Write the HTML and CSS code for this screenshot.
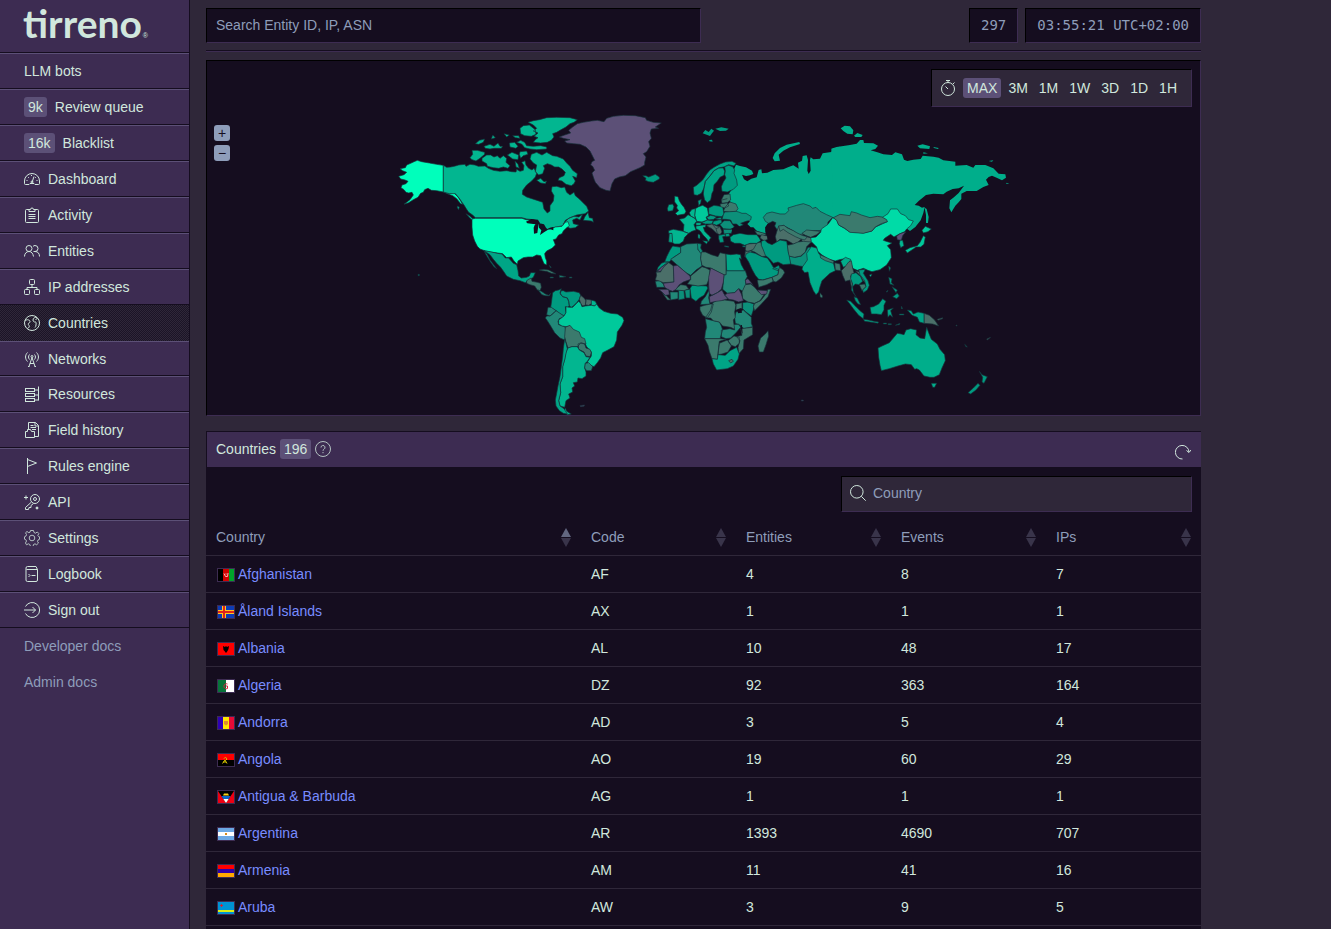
FILE: index.html
```
<!DOCTYPE html>
<html lang="en">
<head>
<meta charset="utf-8">
<title>Countries | tirreno</title>
<link rel="stylesheet" href="styles.css">
</head>
<body>
<aside class="sidebar">
  <a class="logo" href="#"><span class="logo-word">tirreno</span><span class="logo-mark">®</span></a>
  <nav class="nav">
    <a href="#">LLM bots</a>
    <a href="#"><span class="badge">9k</span>Review queue</a>
    <a href="#"><span class="badge">16k</span>Blacklist</a>
    <a href="#"><svg class="icon" viewBox="0 0 16 16"><path d="M1.500 13.500a1 1 0 0 1-1-1V10a7.500 7.500 0 0 1 15 0v2.500a1 1 0 0 1-1 1h-3.500L10 12.500H6l-1 1zM8 11.500l2-6M2.500 9.500h1M4 6l.8.8M7.500 4v1M12 6l-.8.8M13.500 9.500h-1"/><circle cx="8" cy="11" r="1"/></svg>Dashboard</a>
    <a href="#"><svg class="icon" viewBox="0 0 16 16"><path d="M5 2.500H2.500a1 1 0 0 0-1 1v11a1 1 0 0 0 1 1h11a1 1 0 0 0 1-1v-11a1 1 0 0 0-1-1H11M5 4.500v-2h1.500a1.500 1.500 0 0 1 3 0H11v2zM4.500 7.500h7M4.500 9.500h7M4.500 11.500h7"/></svg>Activity</a>
    <a href="#"><svg class="icon" viewBox="0 0 16 16"><circle cx="5" cy="5.500" r="3"/><path d="M.5 13.500c0-3 2-5 4.500-5s4 2 4.500 5M9 3.500c.5-.8 1.300-1 2-1a3 3 0 0 1 0 6H9.500M11 8.500c3 0 4.500 2 4.500 5"/></svg>Entities</a>
    <a href="#"><svg class="icon" viewBox="0 0 16 16"><rect x="5.500" y=".5" width="5" height="5" rx="1"/><rect x=".5" y="10.500" width="5" height="5" rx="1"/><rect x="10.500" y="10.500" width="5" height="5" rx="1"/><path d="M8 5.500v3M3 10.500v-2h10v2"/></svg>IP addresses</a>
    <a class="active" href="#" aria-current="page"><svg class="icon" viewBox="0 0 16 16"><circle cx="8" cy="8" r="7.500"/><path d="M1 5.500c1.500-1 3.500-1 4.500 0s.5 2-.5 2.500-1 1.500 0 2.500-.5 2.500-1.500 3M13 2.500c-2-.5-4 .5-4 2.500s1.500 2 2.500 2 .5 2 .5 3-.5 2-1 2.500M11.500 4.500l2-1"/></svg>Countries</a>
    <a href="#"><svg class="icon" viewBox="0 0 16 16"><path d="M5 15.500l3-9 3 9M6 12.500h4M5.500 15.500H4M10.500 15.500H12M3.500 1.500c-2.600 2.700-2.600 6.300 0 9M12.500 1.500c2.600 2.700 2.600 6.300 0 9M5.500 3.500c-1.300 1.700-1.300 3.300 0 5M10.500 3.500c1.300 1.700 1.300 3.300 0 5"/><circle cx="8" cy="5.500" r="1"/></svg>Networks</a>
    <a href="#"><svg class="icon" viewBox="0 0 16 16"><rect x="1.500" y="2.500" width="9" height="3"/><rect x="1.500" y="7.500" width="9" height="3"/><rect x="1.500" y="12.500" width="9" height="3"/><path d="M14.500.5v14M10.500 4h4M10.500 9h4M10.500 14h4"/></svg>Resources</a>
    <a href="#"><svg class="icon" viewBox="0 0 16 16"><path d="M4.500 7.500v-7h7l3 3v11h-4M11 .5v3.500h3.500M6.500 3.500h3M6.500 5.500h5.500M8 7.500h4M1.500 15.500v-6h2v-2h3l1 2h3v6z"/></svg>Field history</a>
    <a href="#"><svg class="icon" viewBox="0 0 16 16"><path d="M3.500 0v16M3.500 1.500l9 3.500-9 3.500"/></svg>Rules engine</a>
    <a href="#"><svg class="icon" viewBox="0 0 16 16"><circle cx="11" cy="5" r="4.500"/><circle cx="11" cy="5" r="1.500"/><path d="M7.500 8l-6 5.500v2h3l.5-2h2v-2l2.500-2M2 1.500v4M0 3.500h4"/><circle cx="13" cy="14" r="1" fill="currentColor"/></svg>API</a>
    <a href="#"><svg class="icon muted" viewBox="0 0 16 16"><circle cx="8" cy="8" r="2.800"/><path d="M6.500.5h3l.5 2 1.500.7L13.300 2l1.500 1.500-1 2 .7 1 1 .3v2.500l-1.500.7-.5 1.500 1 1.500-1.800 1.800-1.700-1-1.500.7-.5 2h-2.500l-.7-2-1.500-.7-1.800 1L1.500 13l1-2-.7-1.300-1.300-.5V6.800L2 6l.5-1.500-1-1.700L3 1.500l1.800 1.200L6 2.200z"/></svg>Settings</a>
    <a href="#"><svg class="icon" viewBox="0 0 16 16"><path d="M2.500 3.500h11v10.500a1.500 1.500 0 0 1-1.500 1.500H3.500a1.500 1.500 0 0 1-1.500-1.500V2A1.500 1.500 0 0 1 3.500.5H12L13.500 3.500M4.500 8l1.500 1.500L4.500 11M7.500 9.500h4"/></svg>Logbook</a>
    <a href="#"><svg class="icon" viewBox="0 0 16 16"><path d="M1.500 4.500a7.500 7.500 0 1 1 0 7M0 8h11.500M8.500 5l3 3-3 3"/></svg>Sign out</a>
  </nav>
  <div class="docs">
    <a href="#">Developer docs</a>
    <a href="#">Admin docs</a>
  </div>
</aside>

<main class="main">
  <header class="topbar">
    <input class="well global-search" type="search" placeholder="Search Entity ID, IP, ASN" aria-label="Search">
    <div class="stats"><span class="well stat">297</span><time class="well stat">03:55:21 UTC+02:00</time></div>
  </header>

  <section class="map-panel" aria-label="Map">
    <svg class="map" viewBox="207 61 993 354">
      <!-- North America -->
      <g transform="translate(390 105) scale(.333333)">
        <path class="c5" d="M160 181L140 178 118 174 95 170 82 166 72 170 62 175 50 180 46 188 30 191 38 197 50 202 42 209 26 214 32 222 45 225 54 229 48 236 36 240 33 248 42 254 48 262 56 264 66 262 70 270 60 284 42 298 56 293 70 284 84 277 92 265 100 262 104 254 114 250 124 256 140 257 160 261 178 266 192 264 204 276 212 288 218 298 212 296 200 281 188 272 176 268 160 261Z"/>
        <path class="c3" d="M160 181L170 187 182 186 196 183 206 180 225 178 228 184 240 178 255 180 265 184 285 183 295 190 310 196 330 199 350 197 365 200 378 201 380 193 390 199 400 196 402 182 395 172 405 167 408 180 416 190 426 195 432 190 440 205 436 216 425 228 410 240 398 256 397 268 410 276 428 282 444 287 458 292 462 312 472 324 480 318 480 302 490 288 492 272 484 258 486 245 500 244 514 248 524 246 530 262 540 270 552 262 556 272 568 282 580 294 590 304 596 318 585 326 560 330 540 338 526 346 518 362 500 366 480 370 470 374 450 362 446 350 430 344 410 342 396 338 256 338 248 330 236 322 228 310 222 300 216 292 208 280 196 266 178 266 160 261Z
        M526 362L520 356 536 340 552 334 566 336 578 328 570 345 560 340 548 345 550 356 566 360 556 368 540 370ZM594 322L584 336 580 346 604 348 610 352 608 340 598 338ZM228 326L238 332 252 344 254 350 240 340ZM202 303L208 306 206 314 202 308Z
        M414 52L430 47 448 44 470 38 500 37 540 38 562 44 552 52 540 56 528 66 510 76 500 82 488 86 492 96 484 106 472 112 452 114 430 112 436 104 444 98 432 94 444 84 430 78 440 70 430 60ZM390 70L400 62 418 60 436 74 438 88 424 94 404 92 392 86ZM380 112L392 106 404 112 410 122 430 124 452 122 470 126 470 132 440 134 420 132 404 128 396 118Z
        M276 160L290 150 302 150 312 156 322 152 330 160 340 152 350 160 348 172 360 182 354 190 340 186 326 190 310 188 292 184 290 176 276 168ZM246 136L262 136 284 142 284 148 270 160 258 168 246 164 240 158 248 148ZM282 124L300 118 312 124 324 114 330 124 338 124 334 130 312 130 300 132 286 130ZM256 116L268 106 284 102 280 112 266 118ZM308 90L316 98 304 102ZM342 86L358 90 350 96ZM358 114L374 112 384 124 378 130 360 126ZM368 92L386 92 390 100 376 98ZM352 150L366 142 386 150 384 164 368 162ZM390 140L410 138 414 148 400 152 392 160 388 148ZM375 168L384 178 388 190 378 186Z
        M424 148L440 142 456 150 470 142 488 152 500 154 520 162 530 174 540 184 548 196 562 206 560 218 548 214 556 228 552 236 544 242 528 238 516 228 504 226 508 218 522 212 526 202 516 192 506 186 494 186 484 180 472 176 460 182 464 190 458 206 446 210 436 200 440 180 430 174 420 162ZM440 226L452 220 462 230 470 228 466 236 452 234Z"/>
        <path class="c5" d="M246 342L256 340 396 340 408 344 430 346 446 350 452 364 470 374 482 372 496 366 516 364 526 352 534 350 538 362 528 370 520 378 516 386 506 390 498 402 490 404 494 414 496 420 486 430 470 438 464 446 466 458 470 468 470 480 462 476 456 462 452 452 440 450 428 456 414 456 400 458 384 468 382 478 372 468 364 456 350 458 338 446 322 444 306 442 286 438 270 432 262 424 254 408 248 390 246 366Z"/>
        <path class="water" d="M408 350L424 342 444 344 450 356 430 357 412 355ZM435 358L446 356 442 384 432 386 431 368ZM446 354L462 358 468 368 474 374 462 382 450 390 454 376 447 368ZM474 370L490 366 490 376Z"/>
        <path class="c0" d="M508 96L524 90 542 84 536 76 548 66 562 56 580 52 604 48 622 46 642 50 650 40 670 34 700 31 736 32 766 38 770 46 790 52 814 54 796 66 806 70 784 72 780 84 784 100 776 110 780 124 770 140 760 146 768 156 764 172 764 180 750 188 736 194 722 200 706 212 688 216 674 222 666 236 660 258 648 256 630 248 616 232 612 222 606 204 614 196 608 184 602 180 606 170 614 166 606 150 600 138 588 126 570 118 550 116 530 114 524 108 540 104 520 100Z"/>
        <path class="c2" d="M758 212L768 212 776 216 796 208 808 216 808 222 790 232 776 230 766 226 768 220ZM84 508h4v4h-4Z"/>
      </g>
      <!-- Central and South America -->
      <g transform="translate(480 250) scale(.333333)">
        <path class="c2b" d="M12 2L30 5 44 8 52 10 66 12 76 24 86 24 100 40 110 44 114 62 116 78 124 84 140 82 148 78 152 68 166 68 160 82 154 86 142 92 136 98 120 92 100 88 80 78 72 66 62 52 50 40 40 28 30 14ZM12 2L22 14 30 30 44 48 50 56 42 50 30 34 18 14Z"/>
        <path class="c1" d="M140 92L146 88 154 84 156 94 172 97 182 100 184 112 180 122 172 120 164 108 150 104 140 100ZM178 60L192 58 206 60 222 68 228 72 214 70 200 64 186 62Z"/>
        <path class="c1b" d="M174 120L184 124 196 132 206 136 212 130 208 138 196 137 186 134ZM238 76L258 80 248 82 238 82ZM210 81h10v3h-10ZM268 81h8v3h-8ZM208 46L214 52 211 53Z"/>
        <path class="c2" d="M218 128L226 122 236 120 244 116 240 128 248 140 262 144 266 154 268 168 262 172 256 170 258 188 252 198 238 190 228 182 212 172 214 160 216 144ZM244 122L250 122 258 126 280 124 298 128 302 136 298 148 290 158 280 168 274 172 268 168 266 154 262 144 248 140 240 132Z"/>
        <path class="c0b" d="M302 136L312 144 318 152 316 166 308 168 302 160 298 148ZM318 148L334 150 336 160 326 166 316 164Z"/>
        <path class="c3" d="M334 150L346 154 350 162 344 168 334 166Z"/>
        <path class="c1b" d="M204 172L214 172 228 182 220 190 210 198 200 194 202 182ZM200 198L210 198 222 188 228 182 240 190 252 198 248 202 238 206 234 214 236 224 248 228 256 232 258 248 254 270 240 264 224 248 212 228 202 212 196 204Z"/>
        <path class="c4" d="M258 170L268 172 278 172 290 160 296 154 302 160 306 170 316 168 334 166 344 168 350 162 358 174 372 184 392 190 412 192 428 202 432 212 426 226 412 246 410 270 402 290 384 300 368 308 362 324 352 338 342 350 328 344 322 336 334 318 334 306 320 290 316 282 300 262 280 244 270 228 258 230 246 228 236 222 236 210 252 198 258 188Z"/>
        <path class="c1" d="M256 232L270 226 280 238 298 246 304 262 314 266 318 282 302 280 292 290 276 290 264 294 258 276 254 260ZM294 282L304 278 314 282 318 294 330 298 334 308 330 320 318 318 312 306 296 298Z"/>
        <path class="c3" d="M264 294L276 290 292 290 298 300 312 308 318 320 330 322 322 334 316 340 314 354 318 366 318 378 306 386 294 384 292 396 280 398 284 408 276 414 278 426 266 432 270 444 258 452 256 462 254 472 240 468 236 452 242 428 240 402 248 380 248 350 254 328 258 306ZM256 474L260 484 274 492 262 494 252 484Z"/>
        <path class="c1b" d="M316 340L326 338 338 350 334 362 320 362 314 354Z"/>
        <path class="c2b" d="M254 268L258 280 262 296 258 310 254 330 248 350 248 380 240 402 242 428 236 452 240 468 252 476 258 486 262 492 250 490 238 482 228 468 226 450 230 430 234 408 240 380 244 350 248 320 250 296Z"/>
        <path class="c0" d="M300 467L314 465 312 469 302 470Z"/>
      </g>
      <!-- Russia -->
      <g class="plain" transform="translate(640 140) scale(.333333)">
        <path class="c2c" d="M288 74L300 78 318 82 336 92 340 102 330 106 318 108 306 104 312 118 322 124 334 116 350 112 356 90 364 88 366 100 382 98 400 90 430 88 444 82 460 76 476 86 474 68 486 62 488 48 500 46 504 60 502 92 506 102 512 92 510 60 512 52 520 58 540 56 548 40 574 36 578 26 600 20 606 240 578 232 560 240 480 230 390 240 384 252 376 262 378 280 366 278 350 272 340 262 332 262 322 252 330 244 300 236 280 200 268 180 266 162 276 148 290 132 286 120 280 100 282 88ZM398 54L404 40 420 24 440 14 478 6 480 12 450 22 430 32 416 44 420 62 404 64Z"/>
        <path class="c2" d="M188-20L196-30 206-24 214-34 222-28 216-20 210-12 204-14ZM226-34L244-38 266-34 258-28 240-27ZM208 0L216-1 218 5 208 4Z"/>
      </g>
      <g class="plain" transform="translate(800 115) scale(.333333)">
        <path class="c2c" d="M94 101L98 100 110 96 150 90 170 86 180 75 190 75 192 84 220 85 234 92 226 102 212 106 232 112 250 118 276 120 286 112 306 118 312 134 322 138 340 134 362 132 368 122 400 125 416 128 430 136 466 140 466 152 500 150 520 158 526 150 556 150 580 160 596 176 616 178 618 188 606 196 590 188 576 182 566 186 558 194 566 210 550 216 530 228 500 228 484 236 484 252 476 262 466 272 454 292 448 280 450 256 460 248 476 234 492 212 476 220 458 222 440 230 430 238 400 236 378 240 356 258 344 270 356 272 366 278 374 276 370 294 362 316 346 336 330 348 322 342 260 330 100 312ZM122 40L134 32 150 34 160 46 158 58 142 56 130 48ZM162 62L172 54 188 60 184 66 166 66ZM352 92L368 88 390 94 388 102 360 100ZM400 96L416 99 414 102 402 99ZM370 112L384 115 370 116ZM566 138L580 136 576 140ZM374 278L380 282 386 306 384 324 378 324 378 300ZM618 203L628 207 620 207Z"/>
      </g>
      <!-- Europe, Middle East and Central Asia -->
      <g transform="translate(640 140) scale(.333333)">
        <path class="c2b" d="M160 142L170 136 188 120 200 102 210 90 222 82 240 72 256 66 276 64 288 70 282 78 266 74 254 80 236 84 222 92 210 108 196 124 192 144 184 160 172 166 162 164ZM236 84L250 84 254 94 252 106 240 112 232 124 222 134 220 152 216 160 212 180 202 188 194 180 190 162 192 144 196 124 210 108 222 92ZM82 206L86 194 98 192 102 200 98 212 84 214ZM88 280L98 280 98 308 86 306ZM174 182L184 178 182 190 176 198Z"/>
        <path class="c2" d="M254 80L266 76 278 80 284 90 282 100 290 120 292 136 280 148 262 156 246 154 244 140 250 126 258 114 254 104 256 94ZM206 204L222 196 248 200 252 222 246 230 226 228 206 222ZM200 232L212 226 230 230 222 238 206 240ZM184 248L202 240 220 242 216 252 196 252ZM220 244L244 238 246 248 230 256 218 252ZM224 236L244 232 244 240ZM236 286L256 282 258 288 248 290 252 306 240 308 236 296ZM254 317L266 319 266 322 254 320ZM308 317h10v4h-10Z"/>
        <path class="c4" d="M104 168L114 170 118 182 124 192 132 202 138 214 134 222 112 226 106 220 116 212 110 204 112 196 104 186ZM166 206L176 200 188 196 202 204 206 226 198 232 202 240 186 246 170 244 164 226Z"/>
        <path class="c3" d="M118 238L134 234 144 224 156 230 166 236 170 244 162 254 168 270 156 274 146 280 130 274 132 254ZM86 272L100 268 130 274 146 280 134 292 130 304 118 312 104 312 98 308 96 280 86 280ZM148 218L156 208 166 206 164 226 166 236 152 228ZM168 248L184 248 182 256 168 256ZM168 258L182 256 198 254 196 262 190 262 194 274 206 286 214 294 210 296 206 306 200 296 190 286 180 272 168 266ZM188 302L204 304 200 312ZM174 282L180 284 180 296 174 294Z"/>
        <path class="c1" d="M250 214L256 200 270 186 288 192 294 206 288 214 268 216ZM244 180L252 164 270 162 272 180 262 188 246 190ZM240 192L262 188 266 198 254 204 242 200ZM344 272L366 278 380 282 370 288 352 284ZM340 312L362 306 372 330 380 348 366 350 344 336 332 332Z"/>
        <path class="c1c" d="M250 224L254 216 288 214 296 216 306 220 318 220 334 230 332 240 318 244 302 250 310 254 298 260 290 252 278 252 272 240 258 238 246 238ZM240 254L252 242 270 242 278 254 284 262 270 268 250 266ZM250 268L278 268 274 280 252 282ZM446 348L466 352 484 348 496 336 504 322 522 322 530 332 516 346 508 362 498 368 494 380 478 378 452 372Z"/>
        <path class="c0b" d="M200 256L216 252 230 258 240 260 246 276 240 284 230 280 216 266 204 260ZM364 284L382 288 384 298 372 302 360 294ZM318 312L350 310 340 328 322 336 316 330ZM316 334L336 332 330 346 314 350Z"/>
        <path class="outline" d="M218 254L228 266 238 262M228 266L232 280M262 176L246 180"/>
        <path class="c2b" d="M270 292L280 284 300 280 324 284 350 284 358 294 362 302 350 310 330 310 314 316 300 310 284 310 272 304ZM256 282L266 280 270 288 258 290Z"/>
        <path class="water" d="M376 262L384 250 404 246 408 258 402 268 412 282 412 304 396 312 384 306 382 290 376 276ZM276 276L276 266 290 256 302 260 312 258 322 264 340 272 344 282 324 282 300 278 284 282Z"/>
        <path class="c1b" d="M370 232L380 220 396 216 420 222 436 222 446 212 444 204 470 196 490 191 510 198 518 205 528 202 540 214 560 224 578 232 564 246 562 262 544 272 520 272 500 276 486 286 474 282 458 272 440 262 430 256 418 260 412 270 404 258 408 248 398 244 386 250 376 244Z"/>
        <path class="c0b" d="M410 276L416 258 440 262 458 272 474 284 488 282 490 292 472 308 460 312 440 300 420 298 410 306 406 290ZM484 292L500 290 514 294 516 306 500 310 486 304Z"/>
        <path class="c1" d="M416 258L432 256 442 264 460 272 470 278 486 286 502 290 494 300 480 296 466 290 444 278 430 268 420 274ZM486 280L500 270 520 272 542 274 530 284 512 292 496 286ZM442 316L460 312 474 306 490 304 514 306 500 320 496 336 482 348 464 352 446 348 444 334Z"/>
        <path class="c2" d="M364 304L374 300 382 308 396 314 410 306 420 300 440 304 442 316 444 334 448 350 452 372 430 374 414 366 400 370 388 356 376 346 370 330 364 316Z"/>
      </g>
      <!-- Africa and Arabia -->
      <g transform="translate(640 230) scale(.333333)">
        <path class="c2" d="M98 48L122 52 122 68 98 84 88 96 74 96 80 80 90 60ZM74 96L88 96 64 112 50 124 54 112 64 100ZM318 72L330 66 346 70 366 80 382 84 392 98 400 112 416 118 414 134 396 142 368 150 356 148 346 136 336 118 326 96 316 80ZM398 116L416 106 420 114 414 122ZM150 176L156 166 200 168 204 174 192 196 178 204 168 214 154 204Z"/>
        <path class="c1b" d="M122 50L140 42 170 40 176 44 174 58 184 70 182 84 186 108 168 120 152 136 138 128 92 88 98 84 122 68ZM46 154L60 152 70 162 74 172 50 172ZM90 186L114 186 114 206 92 210ZM184 214L196 200 206 182 204 166 208 190 206 204 210 222 182 224ZM288 246L310 240 334 262 334 280 338 290 312 296 300 286 286 280 284 262ZM196 266L220 272 238 276 244 288 248 300 240 326 194 326 196 306 200 292ZM244 300L270 296 284 300 280 284 296 282 302 292 288 308 272 324 258 326 244 320ZM258 122L316 122 322 140 316 150 318 164 308 184 296 176 284 188 262 190 248 178 250 156 252 134 258 134Z"/>
        <path class="c1c" d="M172 40L184 42 182 54 188 64 182 70 174 58ZM116 180L132 182 134 206 116 210ZM308 218L324 216 342 222 340 240 334 258 318 246 308 236ZM134 180L150 178 150 204 138 204Z"/>
        <path class="c1" d="M184 66L196 66 214 74 234 80 240 68 258 72 258 134 250 134 212 114 198 112 186 106 182 86ZM152 148L152 138 186 110 198 114 210 120 208 144 200 164 174 168 152 164 142 162ZM316 164L332 162 344 172 356 186 372 194 360 212 344 220 324 216 308 206 306 186ZM344 220L362 212 376 194 384 178 392 178 384 200 366 220 344 242 340 230ZM288 222L306 218 306 236 288 240ZM218 218L230 212 254 210 282 214 288 226 284 246 286 262 280 270 284 298 272 292 248 288 238 276 220 272 212 264 196 264 212 240ZM180 230L194 226 212 222 220 222 214 246 202 264 188 256 180 240ZM68 190L78 196 92 210 82 210ZM104 180L122 164 138 166 146 176 132 182ZM302 296L338 292 338 314 312 330 310 356 296 372 294 352 300 332 290 320 306 316ZM264 332L282 318 298 322 298 340 286 350 274 346ZM238 340L262 330 274 348 264 366 246 372 234 374ZM194 326L240 326 258 328 238 334 236 352 232 388 216 386 208 364 204 346ZM384 302L386 318 378 344 370 366 358 366 354 348 362 324 376 312ZM352 150L370 150 396 142 400 154 380 164 356 172ZM396 142L414 134 418 112 430 120 434 128 424 144 408 156 400 154Z"/>
        <path class="c2b" d="M258 72L272 74 290 72 302 74 304 88 298 84 304 104 314 122 260 122ZM216 386L232 388 234 374 256 376 270 362 290 352 298 372 294 388 280 408 262 416 230 420 220 402Z"/>
        <path class="c0b" d="M48 126L62 126 66 110 84 96 100 108 102 156 70 158 56 152 46 150 50 136ZM266 392L276 388 280 394 272 399Z"/>
        <path class="c0" d="M100 108L112 106 150 138 152 148 130 156 118 164 108 178 98 184 86 180 74 172 70 160 102 156ZM212 114L252 134 250 156 244 178 232 188 216 196 208 190 206 164 206 142ZM316 150L324 146 340 166 330 160 318 162ZM254 196L262 190 284 188 296 176 304 192 310 212 296 216 280 210 266 208ZM208 200L232 188 246 180 252 192 264 206 244 212 228 214 210 218ZM352 180L382 182 380 192 364 194ZM88 96L72 110 62 124 50 126 64 112ZM56 178L86 178 88 194 76 196 66 186Z"/>
        <path class="water" d="M292 238L304 234 306 248 294 250ZM302 284L306 286 308 312 304 304Z"/>
      </g>
      <!-- East Asia -->
      <g transform="translate(800 115) scale(.333333)">
        <path class="c4b" d="M98 308L110 314 116 330 134 340 148 350 190 354 216 348 226 336 262 320 258 314 246 308 264 296 272 282 292 282 302 296 316 302 326 314 340 318 332 332 320 342 314 350 296 358 282 366 272 358 254 370 250 376 262 380 276 384 262 392 272 404 274 428 260 450 240 464 216 470 204 466 190 460 172 466 158 460 152 442 140 430 118 434 106 438 84 432 66 420 52 408 50 396 34 380 32 368 48 366 62 352 64 342 84 328ZM208 480L216 477 212 486Z"/>
        <path class="c1" d="M100 308L120 298 150 302 154 290 170 294 184 300 210 308 232 304 246 306 260 314 262 320 244 326 226 336 216 348 190 355 150 352 134 340 116 330 110 316Z"/>
        <path class="c4" d="M316 406L330 398 352 392 360 382 370 362 376 366 372 388 362 396 348 396 340 402 322 414ZM366 346L376 334 394 342 384 350 370 354Z"/>
        <path class="c0" d="M290 364L300 356 318 350 308 362 304 376 292 374Z"/>
        <path class="c3" d="M300 376L308 376 312 392 302 398 298 386Z"/>
      </g>
      <!-- South Asia and Oceania -->
      <g transform="translate(800 240) scale(.333333)">
        <path class="c2c" d="M8 80L22 60 20 40 34 20 50 24 56 40 68 52 100 68 106 92 90 100 66 122 60 140 56 156 48 164 40 152 30 128 24 96 14 98 6 88ZM122 64L136 52 152 58 146 76 130 82Z"/>
        <path class="c1" d="M60 44L82 54 102 64 100 70 76 62 62 54ZM104 68L120 72 122 92 106 90ZM60 158L68 168 66 174 60 170ZM178 134L194 132 198 140 186 152Z"/>
        <path class="c0b" d="M132 84L146 66 154 62 158 84 162 98 152 108 158 136 156 150 150 120 136 124 128 106 124 92ZM166 92L180 96 192 112 198 130 190 122 180 106ZM372 220L388 226 404 240 416 258 398 252 372 250ZM412 238L428 233 428 236 414 241ZM468 255h3v3h-3ZM560 297L572 292 562 300Z"/>
        <path class="c2" d="M154 102L168 98 182 110 188 124 176 134 166 132 158 140 160 156 168 170 162 162 154 150 158 132 152 116ZM176 90L196 88 190 100 204 122 208 136 202 150 190 158 188 150 198 140 194 122 180 104ZM162 170L172 174 182 194 174 192 166 182ZM266 112L276 116 274 128 282 136 270 132ZM276 140L292 150 288 158ZM278 170L292 160 298 168 290 176ZM258 156L264 150 262 156ZM266 78L272 84 268 94ZM538 394L546 404 562 410 552 430 546 426 548 412ZM534 430L540 436 528 450 512 462 504 458 520 444ZM494 313L502 321 498 320Z"/>
        <path class="c2b" d="M140 180L152 184 166 198 180 212 192 222 190 236 176 226 160 206 148 190ZM190 238L206 240 222 244 236 246 234 250 210 246 194 244ZM210 202L220 200 236 192 248 176 258 184 252 196 252 210 244 224 230 222 214 222ZM262 210L280 204 272 212 278 232 270 224 264 232ZM304 198L308 206 304 206ZM322 210L334 212 340 222 354 216 372 220 372 250 358 246 352 232 336 226ZM250 249h10v3h-10ZM264 251h10v3h-10ZM286 256L300 250 298 254ZM298 222h14v3h-14Z"/>
        <path class="c2c" d="M234 324L246 318 268 308 280 294 292 280 304 282 312 284 318 270 332 266 350 270 348 284 360 294 374 296 380 262 386 278 394 298 412 312 420 328 434 344 436 362 426 384 418 404 402 412 390 412 372 408 358 390 350 386 344 388 334 374 316 372 294 378 268 386 244 392 240 376 236 352ZM394 430L410 430 404 442 398 442Z"/>
        <path class="c0" d="M4 480h6v3h-6Z"/>
      </g>
    </svg>
    <div class="map-zoom">
      <button type="button" aria-label="Zoom in">+</button>
      <button type="button" aria-label="Zoom out">−</button>
    </div>
    <div class="well range">
      <svg class="icon" viewBox="0 0 16 16"><circle cx="8" cy="9" r="6.500"/><path d="M6 .5h4M8 .5v2M8 9L5.500 6.500M13 4l1.500-1.500"/></svg>
      <div class="range-items">
        <button type="button" class="selected">MAX</button>
        <button type="button">3M</button>
        <button type="button">1M</button>
        <button type="button">1W</button>
        <button type="button">3D</button>
        <button type="button">1D</button>
        <button type="button">1H</button>
      </div>
    </div>
  </section>

  <section class="list-panel">
    <header class="list-head">
      <h1>Countries</h1><span class="badge">196</span>
      <svg class="icon muted" viewBox="0 0 16 16"><circle cx="8" cy="8" r="7.500"/><path d="M6 6.500a2 2 0 1 1 3 1.700c-.7.400-1 .8-1 1.600M8 11v1.200"/></svg>
      <button class="refresh" type="button" aria-label="Refresh"><svg class="icon" viewBox="0 0 16 16"><path d="M7.500 15A6.800 6.800 0 1 1 14 8M11.500 6.500L14 8.500 16 6"/></svg></button>
    </header>
    <div class="list-tools">
      <label class="well filter">
        <svg class="icon" viewBox="0 0 16 16"><circle cx="6.800" cy="6.800" r="6.300"/><path d="M11.300 11.300l4.400 4.400"/></svg>
        <input type="search" placeholder="Country" aria-label="Country">
      </label>
    </div>
    <table class="grid">
      <thead>
        <tr>
          <th class="name sorted">Country<span class="sort"></span></th>
          <th>Code<span class="sort"></span></th>
          <th>Entities<span class="sort"></span></th>
          <th>Events<span class="sort"></span></th>
          <th>IPs<span class="sort"></span></th>
        </tr>
      </thead>
      <tbody>
        <tr><td><a href="#"><svg class="flag" viewBox="0 0 16 12"><path fill="#000" d="M0 0h5v12H0z"/><path fill="#d30000" d="M5 0h6v12H5z"/><path fill="#00a32a" d="M11 0h5v12h-5z"/><path fill="none" stroke="#ffb4b4" d="M6 4.500l1.500 3h2L10 4M7.500 5h1"/></svg>Afghanistan</a></td><td>AF</td><td>4</td><td>8</td><td>7</td></tr>
        <tr><td><a href="#"><svg class="flag" viewBox="0 0 16 12"><path fill="#0d3cb5" d="M0 0h16v12H0z"/><path fill="#ffc61e" d="M4 0h4v12H4zM0 4h16v4H0z"/><path fill="#e0221c" d="M5 0h2v12H5zM0 5h16v2H0z"/></svg>Åland Islands</a></td><td>AX</td><td>1</td><td>1</td><td>1</td></tr>
        <tr><td><a href="#"><svg class="flag" viewBox="0 0 16 12"><path fill="#f00" d="M0 0h16v12H0z"/><path d="M5 3l2 1 1-1 1 1 2-1-.5 3L9.500 8 8 10 6.500 8 5.500 7z"/></svg>Albania</a></td><td>AL</td><td>10</td><td>48</td><td>17</td></tr>
        <tr><td><a href="#"><svg class="flag" viewBox="0 0 16 12"><path fill="#07733a" d="M0 0h8v12H0z"/><path fill="#fff" d="M8 0h8v12H8z"/><path fill="none" stroke="#d8213f" d="M9.500 4a2.500 2.500 0 1 0 0 4.500V6H8"/></svg>Algeria</a></td><td>DZ</td><td>92</td><td>363</td><td>164</td></tr>
        <tr><td><a href="#"><svg class="flag" viewBox="0 0 16 12"><path fill="#2e00b5" d="M0 0h5v12H0z"/><path fill="#ffe800" d="M5 0h6v12H5z"/><path fill="#e60a36" d="M11 0h5v12h-5z"/><path fill="#e08a30" d="M6 4h4v3L8 8.500 6 7z"/></svg>Andorra</a></td><td>AD</td><td>3</td><td>5</td><td>4</td></tr>
        <tr><td><a href="#"><svg class="flag" viewBox="0 0 16 12"><path fill="#f00" d="M0 0h16v6H0z"/><path d="M0 6h16v6H0z"/><path fill="none" stroke="#d8c800" d="M6 4.500C7 3 9 3 8.500 6M4.500 9.500L7 6l2 3.500M5 8h3"/></svg>Angola</a></td><td>AO</td><td>19</td><td>60</td><td>29</td></tr>
        <tr><td><a href="#"><svg class="flag" viewBox="0 0 16 12"><path fill="#ed0013" d="M0 0h16v12H0z"/><path d="M0 0h16L8 12z"/><path fill="#0b63c8" d="M3.300 5h9.400L10.700 8H5.300z"/><path fill="#fff" d="M5.300 8h5.400L8 12z"/><path fill="#f7d216" d="M5 4.500L6 2.500h4l1 2z"/></svg>Antigua &amp; Barbuda</a></td><td>AG</td><td>1</td><td>1</td><td>1</td></tr>
        <tr><td><a href="#"><svg class="flag" viewBox="0 0 16 12"><path fill="#6ca8e4" d="M0 0h16v12H0z"/><path fill="#fff" d="M0 4h16v4H0z"/><path fill="#d68a1c" d="M7 5h2v2H7z"/></svg>Argentina</a></td><td>AR</td><td>1393</td><td>4690</td><td>707</td></tr>
        <tr><td><a href="#"><svg class="flag" viewBox="0 0 16 12"><path fill="#f00" d="M0 0h16v4H0z"/><path fill="#2d00a8" d="M0 4h16v4H0z"/><path fill="#ffa900" d="M0 8h16v4H0z"/></svg>Armenia</a></td><td>AM</td><td>11</td><td>41</td><td>16</td></tr>
        <tr><td><a href="#"><svg class="flag" viewBox="0 0 16 12"><path fill="#0093d3" d="M0 0h16v12H0z"/><path fill="#d8f018" d="M0 8h16v2H0z"/><path fill="#d82030" d="M3 2h1v1h1v1H4v1H3V4H2V3h1z"/></svg>Aruba</a></td><td>AW</td><td>3</td><td>9</td><td>5</td></tr>
      </tbody>
    </table>
  </section>
</main>
</body>
</html>
```

FILE: styles.css
```
:root {
  --page: #2f2739;
  --panel: #3d2c52;
  --ink: #150d1f;
  --raised: #5c5077;
  --text: #d1e7dd;
  --muted: #8e9dba;
  --link: #788cff;
}

* { box-sizing: border-box; }

body {
  margin: 0;
  display: flex;
  min-height: 100vh;
  background: var(--page);
  color: var(--text);
  font: 14px/20px "Liberation Sans", Arial, sans-serif;
}

a { color: inherit; text-decoration: none; }
button, input { font: inherit; color: inherit; }
button { padding: 0; border: 0; background: none; cursor: pointer; }
input { border: 0; outline: 0; background: none; }
input::placeholder { color: var(--muted); opacity: 1; }

.icon {
  flex: none;
  width: 16px;
  height: 16px;
  fill: none;
  stroke: currentColor;
  stroke-width: 1;
}
.muted { opacity: .8; }

.badge {
  padding: 0 4px;
  border-radius: 3px;
  background: var(--raised);
  line-height: 20px;
}

.well {
  border: 1px solid;
  border-color: #000 var(--panel) var(--panel) #000;
  background: var(--ink);
}

/* Sidebar */
.sidebar {
  flex: none;
  width: 190px;
  border-right: 1px solid var(--ink);
  background: var(--panel);
}
.logo {
  display: flex;
  align-items: baseline;
  gap: 1px;
  height: 53px;
  padding: 4px 0 0 23px;
  border-bottom: 1px solid var(--ink);
}
.logo-word { font: 700 39px/39px Lato, sans-serif; }
.logo-mark { font-size: 7px; line-height: 8px; }
.nav a, .docs a {
  display: flex;
  align-items: center;
  gap: 8px;
  height: 36px;
  padding-left: 24px;
}
.nav a {
  border-top: 1px solid var(--raised);
  border-bottom: 1px solid var(--ink);
}
.nav a.active {
  border: 0;
  background: repeating-conic-gradient(#2f2739 0 25%, #1b1426 0 50%) 0 0 / 2px 2px;
}
.nav a.active + a { height: 35px; }
.docs { color: var(--muted); }

/* Main column */
.main {
  display: flex;
  flex: 1;
  flex-direction: column;
  max-width: 1011px;
  padding: 8px 0 0 16px;
}
.topbar {
  display: flex;
  justify-content: space-between;
  padding-bottom: 7px;
  border-bottom: 1px solid var(--ink);
  box-shadow: 0 1px var(--panel);
}
.global-search { width: 495px; height: 35px; padding: 0 9px 2px; }
.stats { display: flex; gap: 7px; }
.stat {
  padding: 0 11px;
  color: var(--muted);
  font: 14px/33px "DejaVu Sans Mono", monospace;
}

/* Map */
.map-panel {
  position: relative;
  margin: 9px 0 15px;
  border: 1px solid;
  border-color: #000 var(--panel) var(--panel) #000;
  background: var(--ink);
}
.map {
  display: block;
  width: 100%;
  height: auto;
  stroke: #17303a;
  stroke-width: 2;
  stroke-linejoin: round;
}
.map .plain { stroke: none; }
.map .water { fill: var(--ink); stroke: none; }
.map .outline { fill: none; }
.c0 { fill: #5c5077; }
.c0b { fill: #4b6f69; }
.c1 { fill: #3b7a6d; }
.c1b { fill: #218878; }
.c1c { fill: #0c907a; }
.c2 { fill: #009b80; }
.c2b { fill: #00a586; }
.c2c { fill: #00ae8b; }
.c3 { fill: #02b690; }
.c4 { fill: #00c99b; }
.c4b { fill: #00dba7; }
.c5 { fill: #00ffbb; }

.map-zoom {
  position: absolute;
  top: 64px;
  left: 7px;
  display: grid;
  gap: 4px;
}
.map-zoom button {
  width: 16px;
  height: 16px;
  border-radius: 3px;
  background: var(--muted);
  color: var(--ink);
  line-height: 16px;
}
.range {
  position: absolute;
  top: 8px;
  right: 8px;
  display: flex;
  align-items: center;
  gap: 7px;
  height: 38px;
  padding: 0 10px 0 8px;
  background: var(--page);
}
.range-items { display: flex; gap: 3px; }
.range button { padding: 0 4px; border-radius: 3px; line-height: 20px; }
.range .selected { background: var(--raised); }

/* Countries list */
.list-panel {
  flex: 1;
  border-top: 1px solid var(--ink);
  background: var(--ink);
}
.list-head {
  display: flex;
  align-items: center;
  gap: 4px;
  height: 35px;
  margin-left: 1px;
  padding: 0 10px 2px 9px;
  background: var(--panel);
}
.list-head h1 { margin: 0; font: inherit; }
.refresh { display: flex; margin: 6px 0 0 auto; }
.list-tools {
  display: flex;
  justify-content: flex-end;
  padding: 9px 9px 7px;
}
.filter {
  display: flex;
  align-items: center;
  gap: 7px;
  width: 351px;
  height: 36px;
  padding: 0 8px 2px;
  background: var(--page);
}
.filter input { flex: 1; min-width: 0; padding: 0; }

.grid {
  width: 100%;
  border-spacing: 0;
  table-layout: fixed;
}
.grid th, .grid td {
  position: relative;
  height: 37px;
  padding: 0 10px;
  border-bottom: 1px solid var(--page);
  text-align: left;
}
.grid th {
  width: 155px;
  color: var(--muted);
  font-weight: 400;
}
.grid th.name { width: auto; }
.grid td a {
  display: flex;
  align-items: center;
  gap: 3px;
  color: var(--link);
}
.flag {
  width: 18px;
  height: 14px;
  margin: 2px 0 0 1px;
  border: 1px solid var(--panel);
}
.sort {
  position: absolute;
  top: 9px;
  right: 10px;
}
.sort::before, .sort::after {
  content: "";
  display: block;
  border: solid transparent;
  border-width: 0 5px 9px;
  border-bottom-color: #39344a;
}
.sort::after {
  margin-top: 1px;
  border-width: 9px 5px 0;
  border-top-color: #39344a;
}
.sorted .sort::before { border-bottom-color: #626780; }
```
